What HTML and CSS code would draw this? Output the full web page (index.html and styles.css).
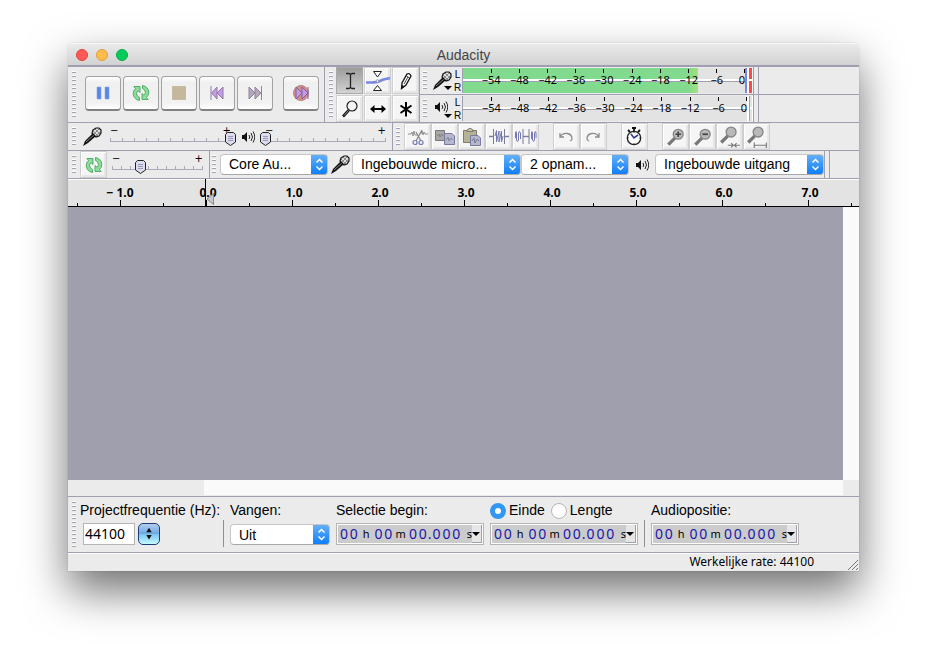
FILE: index.html
```html
<!DOCTYPE html>
<html lang="nl">
<head>
<meta charset="utf-8">
<meta name="viewport" content="width=device-width, initial-scale=1">
<title>Audacity</title>
<link rel="stylesheet" href="styles.css">
</head>
<body>
<svg class="defs" aria-hidden="true">
  <symbol id="mic" viewBox="0 0 20 20">
    <path d="M1 19 3 14 11 6 14 9 6 16Z" fill="#111"/>
    <path d="M4 15 12 8" stroke="#888" stroke-width="1"/>
    <path d="M11 3 14 1 17 1 19 3 19 6 17 9 14 10 12 8 10 6Z" fill="#ddd" stroke="#111" stroke-width="1.2"/>
    <path d="M11 4 16 9M13 2 18 7M17 2 12 7M19 4 14 9" stroke="#555" stroke-width=".6"/>
  </symbol>
  <symbol id="speaker" viewBox="0 0 14 14">
    <path d="M1 5H3L6 2V12L3 9H1Z" fill="#111"/>
    <path d="M8 5Q9.500 7 8 9M10 3Q13 7 10 11M12 1.500Q15.500 7 12 12.500" fill="none" stroke="#222" stroke-width="1"/>
  </symbol>
  <symbol id="loop" viewBox="0 0 18 18">
    <path id="half" d="M7.500 16.500Q2 15.500 1.200 10Q1 6.500 3.500 4.500L1.800 2.500H8V8.500L6 6.800Q4.300 8 4.600 10Q5.200 12.800 7.500 13.500Z" fill="#8edb9b" stroke="#48a860" stroke-width=".9"/>
    <use href="#half" transform="rotate(180 9 9)"/>
  </symbol>
  <symbol id="lens" viewBox="0 0 20 20">
    <path d="M3 17 9 11" stroke="#777" stroke-width="3"/>
    <circle cx="12" cy="7.500" r="4.500" fill="#b9b9b9" stroke="#868686" stroke-width="1.200"/>
  </symbol>
</svg>

<main class="window">
  <header class="titlebar">
    <div class="lights">
      <button class="light close" aria-label="Sluiten"></button>
      <button class="light minimise" aria-label="Minimaliseren"></button>
      <button class="light zoom" aria-label="Vergroten"></button>
    </div>
    <h1>Audacity</h1>
  </header>

  <div class="row top">
    <section class="bar transport" aria-label="Transport">
      <span class="grip"></span>
      <div class="keys">
        <button aria-label="Pauze"><svg viewBox="0 0 18 18"><path d="M3 3h4v12H3zM11 3h4v12h-4z" fill="#5a87e6" stroke="#86a6ee" stroke-width=".6"/></svg></button>
        <button aria-label="Afspelen"><svg><use href="#loop"/></svg></button>
        <button aria-label="Stop"><svg viewBox="0 0 18 18"><path d="M2.500 2.500h13v13h-13z" fill="#c4b79c" stroke="#b5a88e" stroke-width=".6"/></svg></button>
        <button aria-label="Naar begin"><svg viewBox="0 0 18 18"><path d="M3 2V16" stroke="#8f7da8"/><path d="M9 3V15L3.500 9ZM15 3V15L9 9Z" fill="#c79be4" stroke="#8f7da8"/></svg></button>
        <button aria-label="Naar einde"><svg viewBox="0 0 18 18"><path d="M15.500 2V16" stroke="#8e8498"/><path d="M3 3V15L9 9ZM9 3V15L15 9Z" fill="#b5a6be" stroke="#8e8498"/></svg></button>
        <button class="record" aria-label="Opnemen"><svg viewBox="0 0 18 18"><circle cx="9" cy="9" r="7.500" fill="#d98b86" stroke="#b98784"/><path d="M4 3V15L10 9ZM10 3V15L16 9Z" fill="#c79be4" stroke="#7d639b"/><path d="M16 3V15" stroke="#7d639b"/></svg></button>
      </div>
    </section>

    <section class="bar tools" aria-label="Gereedschappen">
      <span class="grip"></span>
      <div class="toolgrid">
        <button class="tool active" aria-label="Selectie"><svg viewBox="0 0 22 22"><path d="M7 3.500H10L11.500 4.500 13 3.500H16M7 18.500H10L11.500 17.500 13 18.500H16M11.500 4V18" fill="none" stroke="#222" stroke-width="1.300"/></svg></button>
        <button class="tool" aria-label="Envelop"><svg class="wide" viewBox="0 0 26 22"><path d="M1 12.500C8 12.500 11 13 15 11S20 9.500 25 8" fill="none" stroke="#7b88e2" stroke-width="2.600"/><path d="M8.500 1.500H16.500L12.500 7ZM8.500 20.500H16.500L12.500 15.500Z" fill="#fff" stroke="#222"/><circle cx="12.500" cy="11" r="1.300" fill="#fff" stroke="#99a"/></svg></button>
        <button class="tool" aria-label="Tekenen"><svg viewBox="0 0 22 22"><path d="M6.500 18.500 7 13 12 4Q14.500 2.500 16 6L11 15Z" fill="#fff" stroke="#111" stroke-width="1.300"/><path d="M11.500 6 14.500 8M9 14 13 7M7 18V15.500L9 16.500Z" fill="#111" stroke="#111" stroke-width=".8"/></svg></button>
        <button class="tool" aria-label="Zoomen"><svg viewBox="0 0 22 22"><path d="M4 18.500 9.500 12.500" stroke="#111" stroke-width="2.600"/><path d="M5 17.500 9 13" stroke="#aaa" stroke-width=".8"/><circle cx="13" cy="8" r="5" fill="#f4f4f4" stroke="#222" stroke-width="1.200"/></svg></button>
        <button class="tool" aria-label="Verschuiven"><svg viewBox="0 0 22 22"><path d="M5 11H17" stroke="#000" stroke-width="2"/><path d="M3 11 7.500 7V15ZM19 11 14.500 7V15Z" fill="#000"/></svg></button>
        <button class="tool" aria-label="Multi"><svg viewBox="0 0 22 22"><path d="M11 4V18.500M5.500 7.500 16.500 15M16.500 7.500 5.500 15" stroke="#000" stroke-width="2"/></svg></button>
      </div>
    </section>

    <div class="meters">
      <section class="meter input" aria-label="Opnameniveau">
        <span class="grip"></span>
        <button class="source" aria-label="Microfoon"><svg class="s20"><use href="#mic"/></svg><i class="caret"></i></button>
        <div class="channels"><span>L</span><span>R</span></div>
        <div class="scale"><i></i><span>−54</span><span>−48</span><span>−42</span><span>−36</span><span>−30</span><span>−24</span><span>−18</span><span>−12</span><span>−6</span><span>0</span></div>
        <div class="clip"></div>
      </section>
      <section class="meter output" aria-label="Afspeelniveau">
        <span class="grip"></span>
        <button class="source" aria-label="Luidspreker"><svg class="s14"><use href="#speaker"/></svg><i class="caret"></i></button>
        <div class="channels"><span>L</span><span>R</span></div>
        <div class="scale"><i></i><span>−54</span><span>−48</span><span>−42</span><span>−36</span><span>−30</span><span>−24</span><span>−18</span><span>−12</span><span>−6</span><span>0</span></div>
        <div class="clip"></div>
      </section>
    </div>
  </div>

  <div class="row">
    <section class="bar mixer" aria-label="Mixer">
      <span class="grip"></span>
      <svg class="s20"><use href="#mic"/></svg>
      <div class="slider"><span class="sign">−</span><span class="sign">+</span><input type="range" min="0" max="100" value="100" aria-label="Opnamevolume"></div>
      <svg class="s14"><use href="#speaker"/></svg>
      <div class="slider"><span class="sign">−</span><span class="sign">+</span><input type="range" min="0" max="100" value="0" aria-label="Afspeelvolume"></div>
    </section>
    <section class="bar edit" aria-label="Bewerken">
      <span class="grip"></span>
      <div class="group">
        <button class="tool" aria-label="Knippen"><svg viewBox="0 0 22 22"><path d="M1 8H4L5 6 6 10 7 5 8 9H10M14 8 15 5 16 9 17 6 18 8H21" fill="none" stroke="#888" stroke-width=".9"/><path d="M15 4 9 15M9 6 14 15" stroke="#888" stroke-width="1.300"/><circle cx="8" cy="16.500" r="2" fill="none" stroke="#7277b0" stroke-width="1.200"/><circle cx="14" cy="16.500" r="2" fill="none" stroke="#7277b0" stroke-width="1.200"/></svg></button>
        <button class="tool" aria-label="Kopiëren"><svg viewBox="0 0 22 22"><path d="M1.500 4.500h9v10h-9z" fill="#a8a8a8" stroke="#777"/><path d="M3 10 5 8 6 11 8 8 9 10" fill="none" stroke="#777" stroke-width=".8"/><path d="M10.500 7.500H18L20.500 10V18.500H10.500Z" fill="#b5b7ca" stroke="#777a9e"/><path d="M12 14 14 11 15 15 17 12 19 14" fill="none" stroke="#777a9e" stroke-width=".9"/></svg></button>
        <button class="tool" aria-label="Plakken"><svg viewBox="0 0 22 22"><path d="M2.500 4.500h13v12h-13z" fill="#b5b296" stroke="#7c7b6d"/><path d="M6 5.500Q6 2.500 9 2.500T12 5.500Z" fill="#d1cb96" stroke="#777"/><path d="M9.500 9.500H17L19.500 12V19.500H9.500Z" fill="#b5b7ca" stroke="#777a9e"/><path d="M11 15 13 12 14 17 16 13 18 15" fill="none" stroke="#777a9e"/></svg></button>
        <button class="tool" aria-label="Bijsnijden"><svg viewBox="0 0 22 22"><path d="M1 10.500H6M16 10.500H21" stroke="#7b7ba8" stroke-width="1.400"/><path d="M5.500 3V18M16.500 3V18" stroke="#7b7b98"/><path d="M7 10 8.500 4.500V16L11 5V16L13.500 5V16L15 10" fill="none" stroke="#777ab0"/></svg></button>
        <button class="tool" aria-label="Stilte"><svg viewBox="0 0 22 22"><path d="M8 10.500H14" stroke="#7b7ba8" stroke-width="1.400"/><path d="M8 3V18M14 3V18" stroke="#7b7b98"/><path d="M.5 12V7Q1 4 1.500 7V14Q2.500 17 3.500 14V7Q4.500 4 5.500 7V13M16.500 13V7Q17 4 17.500 7V14Q18.500 17 19.500 14V7Q20.500 4 21 7V12" fill="none" stroke="#777ab0"/></svg></button>
      </div>
      <div class="group">
        <button class="tool" aria-label="Ongedaan maken"><svg viewBox="0 0 22 22"><path d="M4 7V11H8M4 11C7 6 16 6 16 13Q16 14 14 15" fill="none" stroke="#8b8b8b" stroke-width="1.300"/></svg></button>
        <button class="tool" aria-label="Opnieuw"><svg viewBox="0 0 22 22"><path d="M16 7V11H12M16 11C13 6 4 6 4 13Q4 14 6 15" fill="none" stroke="#8b8b8b" stroke-width="1.300"/></svg></button>
      </div>
      <div class="group">
        <button class="tool" aria-label="Sync-Lock"><svg viewBox="0 0 22 22"><path d="M8 2H12M10 2V5M4 4 6 6M16 4 14 6" stroke="#111" stroke-width="1.800"/><circle cx="10" cy="12" r="6.700" fill="#fff" stroke="#222" stroke-width="1.300"/><path d="M7 8 10 12 14 9" fill="none" stroke="#333a9c" stroke-width="1.600"/><path d="M10 6V7M10 17V18M4 12H5M15 12H16" stroke="#555"/></svg></button>
      </div>
      <div class="group">
        <button class="tool" aria-label="Inzoomen"><svg viewBox="0 0 20 20"><use href="#lens"/><path d="M9.500 7.500H14.500M12 5V10" stroke="#444" stroke-width="1.500"/></svg></button>
        <button class="tool" aria-label="Uitzoomen"><svg viewBox="0 0 20 20"><use href="#lens"/><path d="M9.500 7.500H14.500" stroke="#444" stroke-width="1.600"/></svg></button>
        <button class="tool" aria-label="Selectie passend"><svg viewBox="0 0 20 20"><g transform="translate(-1 -2)"><use href="#lens"/></g><path d="M8 17.500H19M11 15.500 13 17.500 11 19.500M16 15.500 14 17.500 16 19.500" fill="none" stroke="#777"/></svg></button>
        <button class="tool" aria-label="Project passend"><svg viewBox="0 0 20 20"><g transform="translate(-1 -2)"><use href="#lens"/></g><path d="M7 17.500H19M7.500 15V20M18.500 15V20" fill="none" stroke="#777"/></svg></button>
      </div>
    </section>
  </div>

  <div class="row">
    <section class="bar speed" aria-label="Transcriptie">
      <span class="grip"></span>
      <button class="tool" aria-label="Afspelen op snelheid"><svg class="s18"><use href="#loop"/></svg></button>
      <div class="slider short"><span class="sign">−</span><span class="sign">+</span><input type="range" min="0" max="100" value="31" aria-label="Afspeelsnelheid"></div>
    </section>
    <section class="bar devices" aria-label="Apparaten">
      <span class="grip"></span>
      <select class="host" aria-label="Audiohost"><option>Core Au...</option></select>
      <svg class="s20"><use href="#mic"/></svg>
      <select class="device" aria-label="Opnameapparaat"><option>Ingebouwde micro...</option></select>
      <select class="host" aria-label="Opnamekanalen"><option>2 opnam...</option></select>
      <svg class="s14 out"><use href="#speaker"/></svg>
      <select class="device" aria-label="Afspeelapparaat"><option>Ingebouwde uitgang</option></select>
    </section>
  </div>

  <div class="ruler">
    <span>− 1.0</span><span class="origin">0.0<svg class="playhead" viewBox="0 0 8 12"><path d="M7.500 .5V11.500L1 6Z" fill="#c8c8c8" stroke="#888"/></svg></span><span>1.0</span><span>2.0</span><span>3.0</span><span>4.0</span><span>5.0</span><span>6.0</span><span>7.0</span>
  </div>

  <div class="canvas"><div class="tracks"></div><div class="vscroll"></div></div>
  <div class="hscroll"><div class="hthumb"></div></div>

  <footer>
    <section class="selection" aria-label="Selectie">
      <span class="grip"></span>
      <div class="field rate">
        <label for="rate">Projectfrequentie (Hz):</label>
        <div class="combo">
          <input id="rate" type="text" value="44100">
          <button class="stepper" aria-label="Frequentie kiezen"><svg viewBox="0 0 22 22"><path d="M11 4 14 9H8ZM11 17 14 12H8Z" fill="#111"/></svg></button>
        </div>
      </div>
      <span class="divider"></span>
      <div class="field snap">
        <label for="snap">Vangen:</label>
        <select id="snap"><option>Uit</option></select>
      </div>
      <div class="field">
        <span class="caption" id="begin">Selectie begin:</span>
        <div class="time" role="group" aria-labelledby="begin"><b>0</b><b>0</b><i>h</i><b>0</b><b>0</b><i>m</i><b>0</b><b>0</b><b class="dot">.</b><b>0</b><b>0</b><b>0</b><i class="sec">s</i><button aria-label="Notatie"><i class="caret"></i></button></div>
      </div>
      <div class="field end">
        <div class="choices">
          <label><input type="radio" name="mode" checked>Einde</label>
          <label><input type="radio" name="mode">Lengte</label>
        </div>
        <div class="time" role="group" aria-label="Einde"><b>0</b><b>0</b><i>h</i><b>0</b><b>0</b><i>m</i><b>0</b><b>0</b><b class="dot">.</b><b>0</b><b>0</b><b>0</b><i class="sec">s</i><button aria-label="Notatie"><i class="caret"></i></button></div>
      </div>
      <span class="divider"></span>
      <div class="field">
        <span class="caption" id="pos">Audiopositie:</span>
        <div class="time" role="group" aria-labelledby="pos"><b>0</b><b>0</b><i>h</i><b>0</b><b>0</b><i>m</i><b>0</b><b>0</b><b class="dot">.</b><b>0</b><b>0</b><b>0</b><i class="sec">s</i><button aria-label="Notatie"><i class="caret"></i></button></div>
      </div>
    </section>
    <div class="status">
      <span>Werkelijke rate: 44100</span>
      <svg viewBox="0 0 12 12"><path d="M1 11 11 1M5 11 11 5M9 11 11 9" stroke="#777"/></svg>
    </div>
  </footer>
</main>
</body>
</html>
```

FILE: styles.css
```css
* { box-sizing: border-box; }

:root {
  --line: #a09fb2;
  --face: #ebebeb;
}

body {
  margin: 0;
  min-height: 100vh;
  padding: 43px 68px 92px;
  display: flex;
  background: #fff;
  color: #000;
  font-family: "Liberation Sans", Arial, sans-serif;
  font-size: 14px;
}

button, input, select { margin: 0; font: inherit; color: inherit; }
button { padding: 0; border: 0; background: none; }
svg { display: block; flex: none; }
.defs { position: absolute; width: 0; height: 0; }
.s20 { width: 20px; height: 20px; }
.s18 { width: 18px; height: 18px; }
.s14 { width: 14px; height: 14px; }

.window {
  flex: 1;
  min-width: 0;
  display: flex;
  flex-direction: column;
  background: var(--face);
  border-radius: 5px 5px 0 0;
  box-shadow: 0 0 1px rgba(0, 0, 0, .4), 0 20px 44px rgba(0, 0, 0, .56);
}

/* Title bar */
.titlebar {
  height: 24px;
  display: grid;
  grid-template-columns: 1fr auto 1fr;
  align-items: center;
  padding: 0 8px;
  border-bottom: 2px solid var(--line);
  border-radius: 5px 5px 0 0;
  box-shadow: inset 0 1px #f7f7f7;
  background: linear-gradient(#ebebeb, #d2d2d2);
}
.titlebar h1 { margin: 2px 0 0; font-size: 14px; font-weight: 400; color: #444; }
.lights { display: flex; gap: 8px; padding-top: 1px; }
.light { width: 12px; height: 12px; border-radius: 50%; }
.close { background: #fc5b57; border: 1px solid #e2443f; }
.minimise { background: #fdbc4b; border: 1px solid #e0a03a; }
.zoom { background: #05cb5a; border: 1px solid #06ad4b; }

/* Toolbar rows */
.row { display: flex; height: 28px; border-bottom: 1px solid var(--line); }
.row.top { height: 56px; }
.bar { display: flex; align-items: center; border-right: 1px solid var(--line); }
.grip {
  flex: none;
  align-self: stretch;
  width: 4px;
  margin: 4px 7px 4px 4px;
  background: repeating-linear-gradient(#fff 0 1px, #a3a2b6 1px 2px, transparent 2px 4px);
}

.transport { width: 257px; }
.keys { display: flex; gap: 2px; padding: 0 0 2px 2px; }
.keys button {
  width: 36px;
  height: 35px;
  display: grid;
  place-items: center;
  border: 1px solid #a2a2a2;
  border-bottom: 2px solid #818181;
  border-radius: 4px;
  background: linear-gradient(#fff, #f0f0f0 18%, #f2f2f2 80%, #fff);
}
.keys svg { width: 18px; height: 18px; }
.keys .record { margin-left: 8px; }

.tools { width: 95px; }
.tools .grip { margin-right: 3px; }
.toolgrid { display: grid; grid-template-columns: repeat(3, 28px); gap: 1px 0; }
.tool {
  width: 27px;
  height: 27px;
  display: grid;
  place-items: center;
  border: 1px solid #cfcfcf;
  background: #f5f5f5;
  box-shadow: inset 1px 1px #fff, inset -2px -2px 1px #e6e6e6;
}
.tool svg { width: 22px; height: 22px; }
.tool .wide { width: 26px; }
.tool .s18 { width: 18px; height: 18px; }
.tool.active { background: linear-gradient(#9d9d9d, #d2d2d2); border-color: #aaa; box-shadow: none; }

/* Level meters */
.meters { flex: 1; }
.meter { display: flex; height: 27px; align-items: center; }
.meter + .meter { height: 28px; border-top: 1px solid var(--line); }
.meter .grip { margin: 4px 5px 4px 3px; }
.source { position: relative; width: 21px; height: 25px; }
.source .s20 { margin-top: 1px; }
.source .s14 { margin: 0 0 4px 2px; }
.caret {
  display: block;
  border: 4px solid transparent;
  border-top-color: #000;
  border-bottom: 0;
}
.source .caret { position: absolute; right: 1px; bottom: 3px; }
.channels {
  width: 9px;
  display: grid;
  grid-template-rows: 13px 13px;
  justify-items: center;
  font: 10px/13px "Liberation Sans", sans-serif;
}
.scale {
  width: 285px;
  height: 25px;
  display: grid;
  grid-template-columns: 1fr repeat(9, 2fr) 1fr;
  border-left: 1px solid var(--line);
  background: linear-gradient(transparent 11px, #fff 11px 13px, var(--line) 13px 14px, transparent 14px), #e3e3e3;
  font: 11px/13px "Noto Sans", sans-serif;
  text-align: center;
}
.scale span { white-space: nowrap; }
.scale span::before {
  content: "";
  display: block;
  width: 1px;
  height: 4px;
  margin: 1px auto 0;
  background: #000;
}
.scale span:last-child { text-align: right; }
.scale span:last-child::before { margin-right: 0; }
.input .scale {
  border-right: 2px solid #7b83f0;
  background:
    linear-gradient(transparent 11px, #fff 11px 13px, var(--line) 13px 14px, transparent 14px),
    linear-gradient(90deg, #81da8d 0 225px, #a5e07e 235px, #e3e3e3 235px);
}
.clip {
  width: 6px;
  height: 25px;
  border: solid #fff;
  border-width: 0 1px 0 2px;
  background: linear-gradient(#e3e3e3 11px, #fff 11px 13px, #e3e3e3 13px);
}
.input .clip { background: linear-gradient(#ff4848 11px, #fff 11px 13px, #ff4848 13px); }
.output .clip { box-shadow: inset 1px 0 var(--line); }
.meter::after, .devices::after {
  content: "";
  align-self: stretch;
  width: 4px;
  border: solid var(--line);
  border-width: 0 1px;
}

/* Mixer and edit */
.mixer { width: 325px; }
.mixer .grip, .speed .grip { margin-right: 6px; }
.mixer .s14 { margin: 0 5px; }
.slider {
  width: 131px;
  height: 26px;
  display: grid;
  grid-template-columns: 1fr 1fr;
  padding: 0 5px;
  margin-left: 3px;
  background:
    linear-gradient(#aaa9ba, #aaa9ba) 5px 17px / calc(100% - 10px) 1px no-repeat,
    repeating-linear-gradient(90deg, #aaa9ba 0 1px, transparent 1px 12px) 5px 14px / 121px 3px no-repeat;
}
.mixer .s14 + .slider { margin-left: 0; }
.slider.short {
  width: 101px;
  margin-left: 1px;
  background:
    linear-gradient(#aaa9ba, #aaa9ba) 5px 17px / calc(100% - 10px) 1px no-repeat,
    repeating-linear-gradient(90deg, #aaa9ba 0 1px, transparent 1px 9px) 5px 14px / 91px 3px no-repeat;
}
.sign { grid-area: 1 / 1; font: 10px/14px "DejaVu Sans", sans-serif; }
.sign + .sign { grid-area: 1 / 2; text-align: right; }
.slider input {
  grid-area: 1 / 1 / 2 / 3;
  appearance: none;
  width: calc(100% + 10px);
  height: 16px;
  margin: 7px -5px 0;
  background: none;
}
.slider input::-webkit-slider-thumb {
  appearance: none;
  width: 11px;
  height: 14px;
  background: url("data:image/svg+xml,%3Csvg xmlns='http://www.w3.org/2000/svg' viewBox='0 0 11 14'%3E%3Cpath d='M2.5.5H8.500L10.500 2.500V10L5.500 13.500.5 10V2.500Z' fill='%23dcdcef' stroke='%23222'/%3E%3Cpath d='M3 4.500H8M3 6.500H8M3 8.500H8' stroke='%239999b5'/%3E%3C/svg%3E") center / 100% 100% no-repeat;
}
.edit { border: 0; }
.edit .grip { margin: 4px 4px 4px 3px; }
.group { display: flex; margin-right: 14px; }

/* Speed and devices */
.speed { width: 142px; }
.speed .grip { margin-right: 4px; }
.speed .tool { margin-right: -1px; }
.devices { border: 0; }
.devices .grip { margin-left: 2px; margin-right: 4px; }
.devices .s20 { margin: 0 2px; }
.devices .out { margin: 0 6px; }
select {
  appearance: none;
  height: 21px;
  padding: 0 20px 0 8px;
  border: 1px solid #c6c6c6;
  border-bottom-color: #a8a8a8;
  border-radius: 4px;
  background: url("data:image/svg+xml,%3Csvg xmlns='http://www.w3.org/2000/svg' viewBox='0 0 17 21'%3E%3Cdefs%3E%3ClinearGradient id='g' x2='0' y2='1'%3E%3Cstop stop-color='%2368b2f8'/%3E%3Cstop offset='1' stop-color='%230a7cfb'/%3E%3C/linearGradient%3E%3C/defs%3E%3Cpath d='M0 0H14Q17 0 17 3V18Q17 21 14 21H0Z' fill='url(%23g)'/%3E%3Cpath d='M5.500 8.500 8.500 5.500 11.500 8.500M5.500 12.500 8.500 15.500 11.500 12.500' fill='none' stroke='white' stroke-width='1.500'/%3E%3C/svg%3E") right / 17px 21px no-repeat border-box, #fff;
}
.devices select { margin-bottom: 1px; }
.host { width: 108px; }
.device { width: 169px; }

/* Timeline */
.ruler {
  height: 28px;
  display: grid;
  grid-template-columns: repeat(9, 86px);
  overflow: hidden;
  padding: 0 0 0 9px;
  border-bottom: 1px solid #000;
  background:
    repeating-linear-gradient(90deg, #000 0 1px, transparent 1px 86px) 52px 100% / 100% 6px no-repeat,
    repeating-linear-gradient(90deg, #000 0 1px, transparent 1px 86px) 9px 100% / 100% 3px no-repeat,
    #e3e3e3;
  box-shadow: inset 0 1px #fff;
  font: bold 12px/27px "Noto Sans", sans-serif;
  text-align: center;
}
.ruler span + span { padding-left: 4px; }
.origin { position: relative; background: linear-gradient(#000, #000) 42px 0 / 1px 100% no-repeat; }
.playhead { position: absolute; left: 43px; bottom: 1px; width: 8px; height: 12px; }

.canvas { flex: 1; display: flex; }
.tracks { flex: 1; background: #a09fae; }
.vscroll { width: 16px; background: #fafafa; }
.hscroll { height: 16px; padding: 0 16px 0 136px; }
.hthumb { height: 15px; background: #fafafa; }

/* Selection */
.selection { display: flex; height: 57px; border: solid var(--line); border-width: 1px 0; box-shadow: 0 1px #fff; }
.selection .grip { margin-right: 4px; }
.field { width: 148px; margin-right: 6px; padding-top: 5px; }
.field > label, .caption, .choices { display: block; height: 17px; line-height: 17px; margin-bottom: 4px; white-space: nowrap; }
.rate { width: 137px; }
.snap { width: 100px; }
.snap select { display: block; width: 100%; margin-top: 5px; }
.combo { display: flex; gap: 3px; padding-left: 3px; }
.combo input { width: 52px; height: 22px; padding: 0 1px 1px; border: 1px solid #b5b5b5; background: #fff; font: 14px "Noto Sans", sans-serif; }
.stepper { width: 22px; height: 22px; border: 1px solid #1e3d78; border-radius: 5px; background: linear-gradient(#b4cdee, #6fa8e2 48%, #7cc6f2 52%, #c4fbff); }
.stepper svg { width: 20px; height: 20px; }
.divider { width: 1px; margin: 23px 6px 5px 0; background: #8f8f8f; }
.choices { display: flex; gap: 6px; }
.choices label { display: flex; align-items: center; gap: 3px; }
.choices input { appearance: none; width: 16px; height: 16px; border: 1px solid #b5b5b5; border-radius: 50%; background: #fff; }
.choices input:checked { border: 5px solid #3297f3; }
.time {
  display: flex;
  align-items: center;
  height: 22px;
  padding: 1px 1px 1px 2px;
  border: 1px solid #b5b5b5;
  box-shadow: inset 0 0 0 1px #fff;
  background: #cbcbcb;
  font: 14px/18px "Noto Sans", sans-serif;
  text-align: center;
}
.time b { width: 10px; font-weight: 400; color: #1a16ac; }
.time .dot { width: 4px; }
.time i { width: 15px; font-style: normal; font-size: 11px; }
.time .sec { width: 11px; text-align: right; }
.time button { width: 10px; height: 18px; margin-left: auto; background: #e6e6e6; border: solid #a09fae; border-width: 0 1px 1px 0; }
.time .caret { width: 8px; }

.status { display: flex; align-items: center; justify-content: flex-end; height: 18px; gap: 33px; font: 12px/18px "Noto Sans", sans-serif; }
.status svg { width: 12px; height: 12px; align-self: flex-end; }
```
